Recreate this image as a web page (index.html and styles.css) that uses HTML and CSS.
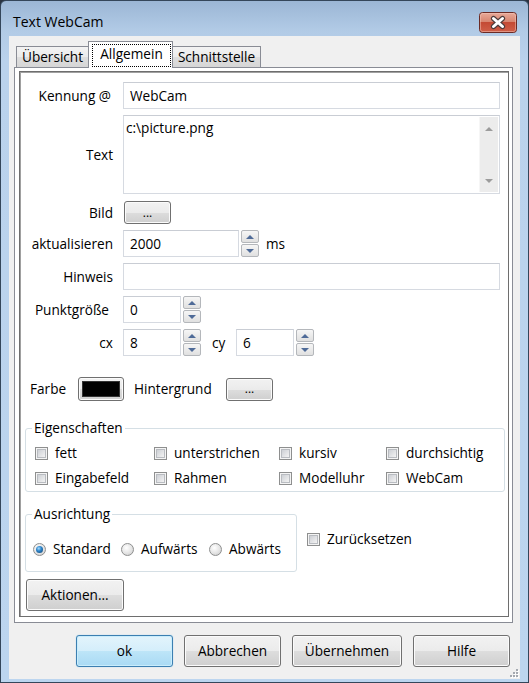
FILE: index.html
```html
<!DOCTYPE html>
<html lang="de">
<head>
<meta charset="utf-8">
<title>Text WebCam</title>
<link rel="stylesheet" href="styles.css">
</head>
<body>
<div class="window">
  <div class="titlebar">
    <span class="title">Text WebCam</span>
    <div class="close">
      <svg width="38" height="21" viewBox="0 0 38 21">
        <defs>
          <linearGradient id="cg" x1="0" y1="0" x2="0" y2="1">
            <stop offset="0" stop-color="#e9ab9b"/>
            <stop offset="0.45" stop-color="#d88671"/>
            <stop offset="0.5" stop-color="#c44a34"/>
            <stop offset="1" stop-color="#d0604a"/>
          </linearGradient>
        </defs>
        <rect x="0.5" y="0.5" width="37" height="20" rx="3" fill="url(#cg)" stroke="#6b2b25"/>
        <rect x="1.5" y="1.5" width="35" height="18" rx="2" fill="none" stroke="#f3c7bb" stroke-opacity="0.5"/>
        <path d="M14.5 6.5 L23.5 14.5 M23.5 6.5 L14.5 14.5" stroke="#4b3b3b" stroke-width="5.2" stroke-linecap="round"/>
        <path d="M14.5 6.5 L23.5 14.5 M23.5 6.5 L14.5 14.5" stroke="#ffffff" stroke-width="3" stroke-linecap="round"/>
      </svg>
    </div>
  </div>
  <div class="client">
    <div class="tabctl">
      <div class="tabstrip">
        <div class="tab t1">Übersicht</div>
        <div class="tab active"><span class="focus">Allgemein</span></div>
        <div class="tab t3">Schnittstelle</div>
      </div>
      <div class="page">
        <div class="inner">
          <div class="row">
            <span class="lbl lbl-k">Kennung @</span>
            <div class="edit grow">WebCam</div>
          </div>
          <div class="row row-text">
            <span class="lbl">Text</span>
            <div class="memo grow">
              <div class="memo-text">c:\picture.png</div>
              <div class="vscroll"><span class="sa up"></span><span class="sa down"></span></div>
            </div>
          </div>
          <div class="row row-bild">
            <span class="lbl">Bild</span>
            <button class="btn dots bild">...</button>
          </div>
          <div class="row row-gap">
            <span class="lbl">aktualisieren</span>
            <div class="edit w-akt">2000</div>
            <div class="spin"><span class="sp up"></span><span class="sp down"></span></div>
            <span class="unit">ms</span>
          </div>
          <div class="row row-gap">
            <span class="lbl">Hinweis</span>
            <div class="edit grow"></div>
          </div>
          <div class="row row-gap">
            <span class="lbl lbl-p">Punktgröße</span>
            <div class="edit w-small">0</div>
            <div class="spin"><span class="sp up"></span><span class="sp down"></span></div>
          </div>
          <div class="row row-gap">
            <span class="lbl">cx</span>
            <div class="edit w-small">8</div>
            <div class="spin"><span class="sp up"></span><span class="sp down"></span></div>
            <span class="cy">cy</span>
            <div class="edit w-small">6</div>
            <div class="spin"><span class="sp up"></span><span class="sp down"></span></div>
          </div>
          <div class="row row-farbe">
            <span class="lbl-farbe">Farbe</span>
            <button class="btn colorbtn"><span class="swatch"></span></button>
            <span class="lbl-hg">Hintergrund</span>
            <button class="btn dots hgbtn">...</button>
          </div>
          <fieldset class="group eig">
            <legend>Eigenschaften</legend>
            <div class="cbgrid">
              <label class="chk"><span class="cb"></span>fett</label>
              <label class="chk"><span class="cb"></span>unterstrichen</label>
              <label class="chk"><span class="cb"></span>kursiv</label>
              <label class="chk"><span class="cb"></span>durchsichtig</label>
              <label class="chk"><span class="cb"></span>Eingabefeld</label>
              <label class="chk"><span class="cb"></span>Rahmen</label>
              <label class="chk"><span class="cb"></span>Modelluhr</label>
              <label class="chk"><span class="cb"></span>WebCam</label>
            </div>
          </fieldset>
          <div class="row-ausr">
            <fieldset class="group ausr">
              <legend>Ausrichtung</legend>
              <div class="rbgrid">
                <label class="rad"><span class="rb on"></span>Standard</label>
                <label class="rad"><span class="rb"></span>Aufwärts</label>
                <label class="rad"><span class="rb"></span>Abwärts</label>
              </div>
            </fieldset>
            <label class="chk reset"><span class="cb"></span>Zurücksetzen</label>
          </div>
          <button class="btn aktionen">Aktionen...</button>
        </div>
      </div>
    </div>
    <div class="buttons">
      <button class="btn dlg default">ok</button>
      <button class="btn dlg">Abbrechen</button>
      <button class="btn dlg wide">Übernehmen</button>
      <button class="btn dlg">Hilfe</button>
    </div>
    <svg class="grip" width="10" height="10" viewBox="0 0 10 10">
      <g fill="#ffffff"><rect x="8" y="2" width="2" height="2"/><rect x="5" y="5" width="2" height="2"/><rect x="8" y="5" width="2" height="2"/><rect x="2" y="8" width="2" height="2"/><rect x="5" y="8" width="2" height="2"/><rect x="8" y="8" width="2" height="2"/></g>
      <g fill="#a4a9b0"><rect x="7" y="1" width="2" height="2"/><rect x="4" y="4" width="2" height="2"/><rect x="7" y="4" width="2" height="2"/><rect x="1" y="7" width="2" height="2"/><rect x="4" y="7" width="2" height="2"/><rect x="7" y="7" width="2" height="2"/></g>
    </svg>
  </div>
</div>
</body>
</html>
```
FILE: styles.css
```css
* { box-sizing: border-box; }
html, body { margin: 0; padding: 0; }
body {
  width: 529px;
  height: 683px;
  overflow: hidden;
  background: #2a3442;
  font-family: "Open Sans", "Noto Sans", sans-serif;
  font-size: 13.6px;
  line-height: 18px;
  color: #000;
}
button { font: inherit; color: inherit; margin: 0; padding: 0; cursor: default; }

.window {
  width: 529px;
  height: 683px;
  border: 1px solid #34465a;
  border-radius: 6px 6px 0 0;
  background: linear-gradient(to bottom, #9bb6d5 0px, #b2cbe6 30px, #bad2ec 60px, #bcd5ef 100%);
  padding: 0 8px 3px;
  display: flex;
  flex-direction: column;
}

.titlebar {
  height: 35px;
  flex: none;
  display: flex;
  align-items: center;
  padding: 7px 3px 0 4px;
}
.title { font-size: 14px; color: #000; }
.close { margin-left: auto; width: 38px; height: 21px; }
.close svg { display: block; }

.client {
  position: relative;
  flex: 1;
  background: #f0f0f0;
  padding: 5px 7px 0 5px;
  display: flex;
  flex-direction: column;
}

.tabstrip {
  height: 26px;
  display: flex;
  align-items: flex-end;
  padding-left: 2px;
  position: relative;
  z-index: 1;
}
.tab {
  height: 21px;
  border: 1px solid #898c95;
  border-bottom: none;
  background: linear-gradient(to bottom, #f3f3f3 0%, #ebebeb 50%, #dedede 51%, #d6d6d6 100%);
  text-align: center;
  line-height: 20px;
  white-space: nowrap;
}
.t1 { width: 73px; }
.t3 { width: 89px; margin-left: -1px; }
.tab.active {
  width: 85px;
  height: 27px;
  margin-left: -1px;
  margin-bottom: -1px;
  background: #fff;
  padding: 2px 1px 1px 3px;
  display: flex;
}
.focus {
  flex: 1;
  border: 1px dotted #000;
  line-height: 18px;
  text-align: center;
}

.page {
  height: 556px;
  border: 1px solid #898c95;
  background: #fff;
  padding: 3px 3px 5px 4px;
}
.inner {
  height: 100%;
  border: 1px solid #6e6e6e;
  box-shadow: inset 1px 1px 0 #a0a0a0;
  padding: 10px 8px 0 0;
  display: flex;
  flex-direction: column;
}

.row { display: flex; align-items: center; height: 27px; flex: none; }
.row-text { margin-top: 6px; height: 79px; }
.row-bild { margin-top: 7px; height: 23px; }
.row-gap { margin-top: 6px; }
.lbl { width: 93px; margin-right: 10px; text-align: right; flex: none; white-space: nowrap; }
.lbl-k { padding-right: 2px; }
.lbl-p { padding-right: 4px; }

.edit {
  height: 27px;
  border: 1px solid #d6dae1;
  border-top-color: #c9cdd4;
  background: #fff;
  padding: 0 6px;
  display: flex;
  align-items: center;
  flex: none;
}
.grow { flex: 1; }
.w-akt { width: 116px; }
.w-small { width: 58px; }

.memo {
  height: 79px;
  border: 1px solid #d6dae1;
  border-top-color: #c9cdd4;
  background: #fff;
  display: flex;
}
.memo-text { flex: 1; padding: 3px 2px; }
.vscroll {
  width: 19px;
  margin: 1px 1px 1px 0;
  background: #ececec;
  border-left: 1px solid #f6f6f6;
  display: flex;
  flex-direction: column;
  justify-content: space-between;
  align-items: center;
  padding: 10px 0 9px;
}
.sa { width: 0; height: 0; border-left: 4px solid transparent; border-right: 4px solid transparent; }
.sa.up { border-bottom: 4px solid #9c9c9c; }
.sa.down { border-top: 4px solid #9c9c9c; }

.spin {
  margin-left: 2px;
  width: 18px;
  height: 27px;
  display: flex;
  flex-direction: column;
  gap: 1px;
  flex: none;
}
.sp {
  height: 13px;
  border: 1px solid #b4b7bb;
  border-radius: 2px;
  background: linear-gradient(to bottom, #f6f6f6, #e0e0e0);
  display: flex;
  align-items: center;
  justify-content: center;
}
.sp::after { content: ""; width: 0; height: 0; border-left: 4px solid transparent; border-right: 4px solid transparent; }
.sp.up::after { border-bottom: 4px solid #4f6b98; }
.sp.down::after { border-top: 4px solid #4f6b98; }
.unit { margin-left: 7px; }
.cy { margin-left: 11px; width: 15px; margin-right: 9px; }

.btn {
  border: 1px solid #707070;
  border-radius: 3px;
  background: linear-gradient(to bottom, #f2f2f2 0%, #ebebeb 50%, #dddddd 51%, #cfcfcf 100%);
  box-shadow: inset 0 0 0 1px #fbfbfb;
  text-align: center;
}
.dots { font-size: 12px; line-height: 18px; }
.bild { width: 47px; height: 23px; margin-left: 1px; }

.row-farbe { margin-top: 21px; height: 24px; }
.lbl-farbe { margin-left: 10px; width: 48px; }
.colorbtn { width: 46px; height: 24px; padding: 3px; display: flex; }
.swatch { flex: 1; background: #000; border: 1px solid #333; }
.lbl-hg { margin-left: 10px; width: 92px; }
.hgbtn { width: 47px; height: 23px; }

.group {
  margin: 0;
  min-width: 0;
  border: 1px solid #d5dfe5;
  border-radius: 3px;
}
.group legend { padding: 0 2px; line-height: 18px; }
.eig {
  margin: 18px -5px 0 5px;
  padding: 6px 0 3px 9px;
}
.eig legend { margin-left: -3px; }
.cbgrid {
  display: grid;
  grid-template-columns: 119px 125px 107px auto;
  grid-auto-rows: 20px;
  row-gap: 5px;
}
.chk { display: flex; align-items: center; gap: 7px; white-space: nowrap; }
.cb {
  width: 13px;
  height: 13px;
  border: 1px solid #8e8f8f;
  background: #f4f4f4;
  padding: 1px;
  flex: none;
  display: flex;
}
.cb::after {
  content: "";
  flex: 1;
  border: 1px solid #b9bcc1;
  background: linear-gradient(135deg, #cdd0d5 0%, #e4e5e7 60%, #f3f3f3 100%);
}

.row-ausr { display: flex; align-items: flex-start; margin-top: 13px; flex: none; }
.ausr {
  margin-left: 5px;
  width: 272px;
  padding: 16px 0 12px 7px;
}
.ausr legend { margin-left: -1px; }
.rbgrid { display: grid; grid-template-columns: 88px 88px auto; height: 20px; }
.rad { display: flex; align-items: center; gap: 7px; white-space: nowrap; }
.rb {
  width: 13px;
  height: 13px;
  border-radius: 50%;
  border: 1px solid #8e8f8f;
  background: radial-gradient(circle at 40% 35%, #ffffff 0%, #e4e4e4 55%, #c6c6c6 100%);
  flex: none;
  display: flex;
  align-items: center;
  justify-content: center;
}
.rb.on::after {
  content: "";
  width: 7px;
  height: 7px;
  border-radius: 50%;
  background: radial-gradient(circle at 40% 35%, #a6dcff 0%, #2f86cb 40%, #0c3d6c 100%);
}
.reset { margin-left: 10px; margin-top: 24px; height: 20px; }

.aktionen { width: 98px; height: 32px; margin: 7px 0 0 6px; flex: none; }

.buttons {
  margin-top: 12px;
  display: flex;
  justify-content: flex-end;
  gap: 11px;
  padding-right: 3px;
}
.dlg { width: 97px; height: 32px; }
.dlg.wide { width: 110px; }
.dlg.default {
  border-color: #3c7fb1;
  background: linear-gradient(to bottom, #e3f4fc 0%, #d4eefb 50%, #bde5f8 51%, #a9daf4 100%);
  box-shadow: inset 0 0 0 1px #c9edfc, 0 0 1px #6dc4ee;
}

.grip { position: absolute; right: 1px; bottom: 1px; }
```
